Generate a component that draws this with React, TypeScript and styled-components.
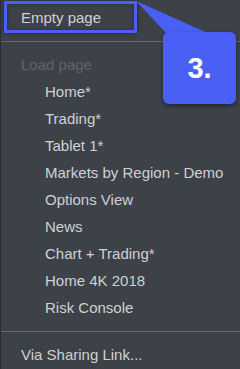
import styled, { createGlobalStyle } from "styled-components";

const GlobalStyle = createGlobalStyle`
  html, body {
    margin: 0;
    padding: 0;
    background: #3d4249;
  }
  body {
    font-family: "Liberation Sans", Arial, sans-serif;
  }
`;

const Menu = styled.div`
  position: relative;
  display: flex;
  flex-direction: column;
  height: 369px;
  box-sizing: border-box;
  padding-top: 4px;
  background: #3d4249;
  border-left: 1px solid #2a2e33;
  overflow: hidden;
`;

const Group = styled.div`
  display: flex;
  flex-direction: column;
`;

const Item = styled.div<{ $indent?: boolean; $h?: number }>`
  flex: none;
  height: ${(p) => p.$h ?? 27}px;
  line-height: ${(p) => p.$h ?? 27}px;
  padding-left: ${(p) => (p.$indent ? 44 : 20)}px;
  font-size: 15px;
  color: #cfd1d4;
  white-space: nowrap;
`;

const Header = styled(Item)`
  color: #5e636a;
`;

const Separator = styled.div<{ $top: number; $bottom: number }>`
  flex: none;
  height: 1px;
  background: #66696e;
  margin: ${(p) => p.$top}px 0 ${(p) => p.$bottom}px;
`;

const Highlight = styled.div`
  position: absolute;
  left: 3px;
  top: 1px;
  width: 127px;
  height: 26px;
  border: 3px solid #4a60f5;
  box-shadow: 0 0 4px rgba(0, 0, 0, 0.45), inset 0 0 4px rgba(0, 0, 0, 0.3);
`;

const Tail = styled.svg`
  position: absolute;
  left: 129px;
  top: 0;
`;

const Callout = styled.div`
  position: absolute;
  left: 162px;
  top: 32px;
  width: 73px;
  height: 72px;
  border-radius: 6px;
  background: #4a60f5;
  box-shadow: 0 2px 4px rgba(0, 0, 0, 0.45);
  display: flex;
  align-items: center;
  justify-content: center;
  color: #ffffff;
  font-size: 29px;
  font-weight: bold;
`;

const pages = [
  "Home*",
  "Trading*",
  "Tablet 1*",
  "Markets by Region - Demo",
  "Options View",
  "News",
  "Chart + Trading*",
  "Home 4K 2018",
  "Risk Console",
];

export default function App() {
  return (
    <>
      <GlobalStyle />
      <Menu>
        <Item>Empty page</Item>
        <Separator $top={10} $bottom={10} />
        <Group>
          <Header $h={26}>Load page</Header>
          {pages.map((name) => (
            <Item key={name} $indent>
              {name}
            </Item>
          ))}
        </Group>
        <Separator $top={10} $bottom={9} />
        <Item>Via Sharing Link...</Item>

        <Highlight />
        <Tail width="90" height="40" viewBox="0 0 90 40">
          <polygon points="6,1 80,34 37,34" fill="#4a60f5" />
        </Tail>
        <Callout>3.</Callout>
      </Menu>
    </>
  );
}
